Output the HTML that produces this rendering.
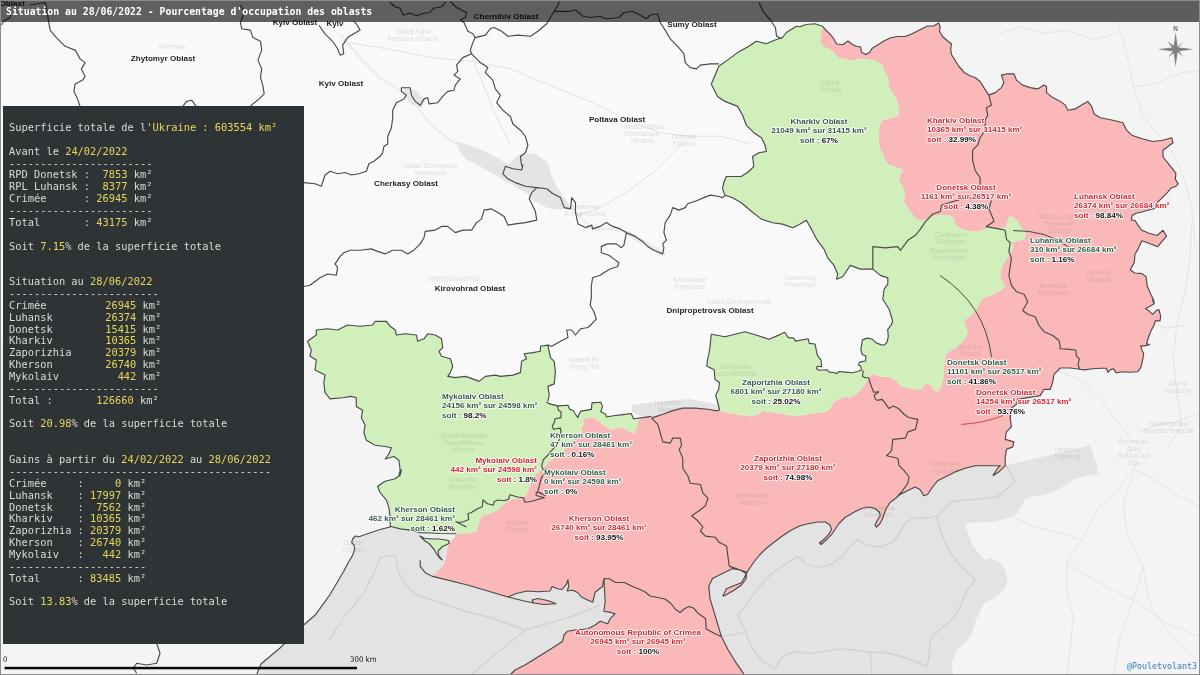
<!DOCTYPE html>
<html lang="fr"><head><meta charset="utf-8"><title>Situation au 28/06/2022</title>
<style>
html,body{margin:0;padding:0;}
body{width:1200px;height:675px;overflow:hidden;background:#f4f4f4;position:relative;font-family:"Liberation Sans",sans-serif;}
#map{position:absolute;left:0;top:0;width:1200px;height:675px;}
#title{position:absolute;left:1px;top:1px;width:1199px;height:21.4px;background:rgba(0,0,0,.62);color:#fff;
 font:bold 9.82px/22px "DejaVu Sans Mono","Liberation Mono",monospace;white-space:pre;padding-left:5px;box-sizing:border-box;}
#panel{position:absolute;left:2.8px;top:106px;width:300.9px;height:537.5px;background:#2e3436;}
#panel pre{margin:0;position:absolute;left:6.2px;top:16.1px;font:10.37px/11.86px "DejaVu Sans Mono","Liberation Mono",monospace;color:#d9dcd6;white-space:pre;}
#panel b{font-weight:normal;color:#e6d659;}
#panel i{display:inline-block;width:2.6px;}
.lb{position:absolute;font:bold 8.1px/9.4px "Liberation Sans",sans-serif;white-space:nowrap;
 text-shadow:0 0 1px #fff,0 0 1px #fff,0 0 2px #fff,0 0 2px #fff,1px 0 0 #fff,-1px 0 0 #fff,0 1px 0 #fff,0 -1px 0 #fff;}
.lb.g{color:#2f5d43;} .lb.r{color:#d7222c;} .lb b{color:#111;}
.lb.c{text-align:center;transform:translateX(-50%);} .lb.e{text-align:right;transform:translateX(-100%);}
.ob{position:absolute;font:bold 8.1px/10px "Liberation Sans",sans-serif;color:#222;white-space:nowrap;transform:translate(-50%,-50%);
 text-shadow:0 0 2px #fff,0 0 3px #fff,0 0 4px #fff,0 0 5px #fff,0 0 6px #fff,0 0 3px #fff,0 0 2px #fff;}
.ct{position:absolute;font:6.4px/7px "Liberation Sans","DejaVu Sans",sans-serif;color:rgba(110,110,110,.2);text-align:center;white-space:nowrap;transform:translate(-50%,-50%);}
#sc0,#sc1{position:absolute;font:7.8px/10px "DejaVu Sans Condensed","DejaVu Sans","Liberation Sans",sans-serif;color:#111;}
#frame{position:absolute;left:0;top:0;width:1198px;height:673px;border:1px solid #8c8c8c;pointer-events:none;}
#credit{text-shadow:0 0 2px #dbe8f7;position:absolute;right:2.8px;top:660.6px;font:8.3px/11px "DejaVu Sans Mono","Liberation Mono",monospace;color:#3d7cc0;}
#panel pre,#title,.lb,.ob,.ct,#credit,#sc0,#sc1,#map{will-change:transform;}
</style></head><body>
<svg id="map" viewBox="0 0 1200 675" width="1200" height="675">
<path d="M256 676 L261 664 L280 648 L300 631 L256 676 L261 664 L280 648 L300 628.3 L306.3 622.8 L315 615.3 L325.5 600.9 L330 594.5 L334.5 587 L339.7 578 L344.2 570.5 L348 563 L352.5 555.5 L354.7 549.5 L354 545 L351.7 542.7 L352.5 539 L355.5 536 L359.2 536.7 L363 535.2 L372 532.2 L381 529.2 L390 527 L390.2 526.3 L460 520 L470 560 L520 578 L612 570 L622 620 L560 676Z" fill="#e3e3e3"/>
<path d="M992.7 475.7 L1005.2 465 L1012.7 463.8 L1030.2 460 L1045.3 456.3 L1060.3 452.5 L1075.3 450 L1090.3 444.4 L1092.8 453.2 L1097.8 468.2 L1097.8 473.8 L1085.3 476.3 L1075.3 478.8 L1065.3 485.1 L1055.3 491.3 L1045.3 495.1 L1035.2 496.3 L1025.2 498.8 L1021.5 506.3 L1017.7 512.6 L1012.7 516.4 L1005.2 518.9 L995.2 521.4 L982.6 522.6 L970.1 522.6 L965.1 525.1 L968.9 535.1 L972.6 545.2 L980.1 555.2 L985.1 560.2 L990.2 557.7 L1000.2 562.7 L1005.2 570.2 L1007.7 580.2 L1005.2 587.7 L1000.2 594 L992.7 599 L985.1 602.8 L980.1 610.3 L977.6 619 L976.7 616.7 L973.3 630 L966.7 641.7 L956.7 650 L951.7 663.3 L953.3 675 L953.3 676 L744 676 L743.8 673.8 L735.1 661.3 L727.5 648.7 L721.3 636.2 L717.5 623.7 L713.8 611.2 L710 598.7 L708.8 586.1 L712.5 578.6 L722.5 573.6 L732.6 568.6 L740.1 569.9 L746.3 573.6 L747.5 571.5 L753.5 562.5 L759.5 555 L765.5 549 L773 543 L782 536.2 L791 530.2 L800 525.7 L809 523.5 L818 522 L825.5 522 L830 525 L831.5 529.5 L828.5 534.7 L824 539.2 L819.5 543 L821 544.5 L827 539.2 L831.5 534.7 L834.5 530.2 L839 523.5 L845 517.5 L854 512.2 L861.5 508.5 L869 507 L875 508.5 L879.5 512.2 L880.2 516 L877.2 520.5 L875 525 L876.5 527.2 L879.5 524.2 L882.5 519 L884 514.5 L886.2 508.5 L890 502.5 L896 498 L900 494.5 L900 494.5 L907.5 490.7 L915 487 L920 489.5 L923.8 495.7 L927.5 494.5 L932.6 487 L937.6 480.7 L945.1 477 L955.1 471.9 L965.1 468.2 L975.1 465.7 L987.7 465.7 L1000.2 465.7 L997.7 468.2 L992.7 475.7Z" fill="#e3e3e3"/>
<path d="M737.6 614.9 L743.8 608.7 L757.6 588.6 L766.4 578.6 L775.1 571.1 L787.7 562.3 L797.7 556.1 L805.2 563.6 L817.7 567.4 L830.2 564.9 L842.7 556.1 L852.8 543.6 L857.8 539.8 L865.3 544.8 L880.3 547.3 L892.8 542.3 L900.4 532.3 L905.4 522.3 L915.4 517.3 L925.4 518.5 L936.7 516 L940.4 531 L947.9 548.6 L960.5 566.1 L975.5 579.9 L966.7 591.1 L960.5 606.2 L952.9 618.7 L940.4 628.7 L930.4 638.7 L929.2 656.3 L926.6 666.3 L915.4 661.3 L900.4 656.3 L885.3 652.5 L870.3 652.5 L855.3 650 L840.2 648.7 L825.2 651.3 L810.2 653.8 L795.2 651.3 L782.6 656.3 L775.1 668.8 L762.6 661.3 L752.6 648.7 L745.1 631.2 L737.6 614.9 M870.3 652.5 L871.6 676.3 M722.5 636.2 L743.8 632.5 M328.8 640.3 L345.1 615.3 L362.6 595.2 L375.1 570.2 L380.1 557.7 L395.2 555.1 L397.7 570.2 L405.2 585.2 L417.7 595.2 L440.2 602.7 L462.8 610.2 L490.3 617.8 L512.9 625.3 L525.4 630.3 L550.4 622.8 L575.5 615.3 L600 605.2 M937 516.5 L952 501.5 L997 497 L1015 482 L1006 465.5 M527.5 628.5 L493 656 L470 676" fill="none" stroke="#d2d2d2" stroke-width="1.5" stroke-linejoin="round"/>
<path d="M0 0 L757 0 L759.1 2.5 L762.9 11.3 L770.4 20 L775.4 27.5 L776.6 36.3 L781.6 38.8 L800 60 L800 150 L900 250 L900 395 L720 415 L650 420 L560 430 L400 430 L400 345 L303 341 L0 341Z" fill="#f9f9f9"/>
<path d="M456.3 141.3 L472.6 146.3 L490.2 153.8 L507.7 163.9 L520.2 153.8 L535.2 153.8 L547.8 162.6 L551.5 175.1 L556.5 186.4 L566.5 200.2 L570.3 207.7 L560.3 209.7 L546.5 207.7 L539 202.7 L531.5 200.2 L527.7 193.9 L515.2 186.4 L497.7 176.4 L480.1 166.4 L465.6 158.9 L458.9 150.1Z" fill="#e4e4e4"/>
<path d="M403 88 L415 90 L425 100 L422 108 L410 104Z" fill="#e4e4e4"/>
<path d="M632 405 L645 403 L660 402 L675 400 L690 399 L705 402 L718 405 L718.8 410.6 L707.9 409.3 L695.3 408.1 L682.8 408.1 L672.8 410.6 L662.8 414.3 L651.5 418.1 L640 416 L632 412Z" fill="#e4e4e4"/>
<path d="M341 35 L360 57.5 L382.5 80 L408.8 95 L431 125 L450 140 L460 146" fill="none" stroke="#ebebeb" stroke-width="2" stroke-linejoin="round" stroke-linecap="round"/>
<path d="M570.3 207.7 L592.6 228.9 L612 229 L626.4 232.6" fill="none" stroke="#ebebeb" stroke-width="2.5" stroke-linejoin="round" stroke-linecap="round"/>
<path d="M626.4 232.6 L640 240 L652 248 L662.7 254" fill="none" stroke="#ebebeb" stroke-width="5" stroke-linejoin="round" stroke-linecap="round"/>
<path d="M1136.7 463.3 L1130 483.3 L1123.3 503.3 L1126.7 533.3 L1143.3 566.7 L1146.7 590 L1153.3 610 L1166.7 630 L1186.7 650 L1200 663.3 M1136.7 463.3 L1120 486.7 L1096.7 510 L1083.3 536.7 L1066.7 563.3 L1066.7 590 L1073.3 616.7 L1070 650 L1066.7 675 M1136.7 470 L1160 483.3 L1180 496.7 L1200 506.7 M1013.3 516.7 L1033.3 526.7 L1060 533.3 L1083.3 540 M1143.3 566.7 L1133.3 600 L1120 636.7 L1113.3 675 M1066.7 563.3 L1100 583.3 L1133.3 600 L1166.7 623.3 L1200 636.7 M1191.7 225 L1190 258.3 L1185 291.7 L1176.7 325 L1173.3 358.3 L1176.7 391.7 L1181.7 425 L1166.7 450 M1140 431.7 L1156.7 425 L1176.7 421.7 L1200 411.7 M1060 371.7 L1083.3 381.7 L1100 398.3 L1120 425 L1133.3 441.7 M1146.7 321.7 L1166.7 328.3 L1185 325 M1116.7 20 L1123.3 40 L1128.3 60 L1133.3 86.7 L1143.3 116.7 L1156.7 133.3 L1173.3 153.3 L1183.3 176.7 L1191.7 206.7 L1195 245 M1000 33.3 L1020 26.7 L1043.3 33.3 L1066.7 30 L1093.3 40 L1116.7 33.3 M1133.3 86.7 L1156.7 83.3 L1180 73.3 L1200 70 M348.7 42.5 L393.7 50 L431.2 57.5 L468.7 61.2 L510 68.7 L555 87.5 L592.5 102.5 L630 121.2 L660 132.5 L686.2 136.2 L719.9 136.2 L749.9 143.7 M686.2 140 L656.2 170 L626.2 192.5 L600 207.5 L577.5 215 M472.5 57.5 L487.5 95 L495 113.7 L510 143.7" fill="none" stroke="#e2e2e2" stroke-width="1" stroke-linejoin="round"/>
<path d="M822.5 26.3 L826.2 30.5 L830 34.2 L833.7 38.7 L836.7 44 L842.7 44.7 L848 41 L851.7 44 L856.2 46.2 L860.7 47 L861.5 52.2 L866 54.5 L869.7 52.2 L872 48.5 L878 44.7 L884 41 L890 38 L897.5 36.5 L905 36.5 L911 34.2 L917 31.2 L923 28.2 L927.5 26 L933.5 26 L938.7 23 L940.2 26.7 L939.5 31.2 L942.5 36.5 L947.7 41 L951.5 44 L950.7 49.2 L951.5 54.5 L955.2 60.5 L959 66.5 L964.2 72.5 L969.5 75.5 L975.5 77.7 L980 81.5 L983.9 87.6 L988.9 95.1 L995.2 92.6 L1001.4 87.6 L1003.9 82.6 L1001.4 75.1 L1007.7 73.8 L1013.9 73.8 L1016.5 80.1 L1022.7 85.1 L1030.2 87.6 L1037.7 88.9 L1044 85.1 L1046.5 86.4 L1046.5 92.6 L1052.8 97.6 L1060.3 101.4 L1065.3 105.1 L1067.8 110.2 L1075.3 108.9 L1081.6 105.1 L1087.8 101.4 L1091.6 106.4 L1094.1 113.9 L1100.4 117.7 L1112.9 120.2 L1122.9 122.7 L1126.6 130.2 L1131.7 135.2 L1142.9 139 L1152.9 141.5 L1163 140.2 L1171.7 137.7 L1173 142.7 L1168 146.5 L1163 150.2 L1163 157 L1167.7 162.9 L1172.4 168.7 L1175.9 173.4 L1175.3 179.3 L1178.2 183.9 L1175.9 186.3 L1171.2 188 L1171.2 188 L1167.7 192.1 L1163 196.8 L1159.5 200.3 L1156 203.8 L1154.8 208.5 L1147.8 210.3 L1141.9 212 L1136.1 213.2 L1132 215.6 L1131.4 220.2 L1134.9 220.2 L1137.8 224.9 L1140.8 229 L1141.9 230.3 L1149 233.2 L1157.2 235.5 L1163 230.3 L1166.5 236.1 L1157.7 246.7 L1150.1 243.7 L1141.9 240.8 L1137.8 249.6 L1134.9 254.3 L1134.3 262.5 L1130.2 270.1 L1134.9 273 L1141.9 273.6 L1146 276.5 L1147.2 285.9 L1150.7 294.1 L1153.6 299.9 L1154.2 304 L1152.5 299.7 L1154.2 303.8 L1149 306.7 L1145.5 308.5 L1149 310.8 L1152.5 314.3 L1156 310.8 L1158.9 309.6 L1160.7 316.1 L1160.1 320.8 L1155.4 320.8 L1153.6 326 L1151.3 330.1 L1149 336 L1147.2 341.2 L1146.6 343.6 L1149.5 344.7 L1144.3 345.9 L1140.8 345.9 L1141.9 350 L1143.7 353.5 L1142.5 360.6 L1140.8 367.6 L1137.8 371.7 L1137.8 371.7 L1130.2 372.3 L1123.2 371.7 L1116.2 372.8 L1113.3 368.7 L1110.3 369.9 L1108 372.3 L1106.2 368.2 L1101 368.2 L1092.8 368.7 L1084.6 369.9 L1079.9 369.3 L1079.9 369.3 L1070.3 368 L1060.3 368 L1054 374.3 L1052.8 381.8 L1050.3 389.3 L1044 389.3 L1040.2 395.6 L1025.2 398.1 L1017.7 399.3 L1016.5 404.3 L1011.4 408.1 L1010.2 418.1 L1011.4 426.9 L1006.4 431.9 L1005.2 439.4 L1013.9 441.9 L1012.7 446.9 L1006.4 449.4 L1005.2 458.2 L1005.2 465.7 L998.9 471.9 L992.7 475.7 L997.7 468.2 L1000.2 465.7 L987.7 465.7 L975.1 465.7 L965.1 468.2 L955.1 471.9 L945.1 477 L937.6 480.7 L932.6 487 L927.5 494.5 L923.8 495.7 L920 489.5 L915 487 L907.5 490.7 L900 494.5 L900 494.5 L896 498 L890 502.5 L886.2 508.5 L884 514.5 L882.5 519 L879.5 524.2 L876.5 527.2 L875 525 L877.2 520.5 L880.2 516 L879.5 512.2 L875 508.5 L869 507 L861.5 508.5 L854 512.2 L845 517.5 L839 523.5 L834.5 530.2 L831.5 534.7 L827 539.2 L821 544.5 L819.5 543 L824 539.2 L828.5 534.7 L831.5 529.5 L830 525 L825.5 522 L818 522 L809 523.5 L800 525.7 L791 530.2 L782 536.2 L773 543 L765.5 549 L759.5 555 L753.5 562.5 L747.5 571.5 L746.3 573.6 L740.1 569.9 L732.6 568.6 L722.5 573.6 L712.5 578.6 L708.8 586.1 L710 598.7 L713.8 611.2 L717.5 623.7 L721.3 636.2 L727.5 648.7 L735.1 661.3 L743.8 673.8 L744 676 L510 676 L510 675 L515 670 L525 665 L535.1 658.8 L545.1 652.5 L555.1 646.2 L562.6 641.2 L563.9 635 L567.6 631.2 L575.1 630 L587.7 628.7 L595.2 625 L600.2 621.2 L607.7 623.7 L610.2 618.7 L615.2 613.7 L610.2 612.4 L603.9 611.2 L605.2 601.2 L603.9 578.6 L602.5 586.5 L599.5 588.7 L595 592.5 L594.2 596.2 L592.7 602.2 L587.5 600 L581.5 597 L577.7 592.5 L572.5 590.2 L567.2 591 L568.7 586.5 L568 579.7 L566.5 584.2 L562 589.5 L557.5 588.7 L552.2 586.5 L550 591 L538 591.7 L527.5 591 L517 593.2 L509.5 596.2 L508 597 L467.5 585 L432.7 576.4 L438 570.9 L441 568.2 L444.7 563 L446.2 557 L447 551 L448.5 545 L451.5 540.5 L455.2 536.7 L456 533.7 L462 533.7 L469.5 533 L477 531.5 L477.7 525.5 L480 519.5 L483 515 L488.2 514.2 L493.5 512 L498 509.7 L501.7 506 L507 501.5 L513 499.2 L519 497.7 L525 496.2 L528 491 L531 483.5 L534 476 L540.1 470.7 L542.8 469.1 L545.8 465.6 L548.1 462 L561 454.4 L566.8 445.1 L582 432.2 L580.9 428.1 L583.8 424 L582.6 419.9 L586.7 418.1 L592.6 417.6 L597.8 419.9 L601.9 424 L606.6 427.5 L612.5 429.8 L618.3 427.5 L623 428.1 L628.9 431 L634.1 433.4 L637.1 426.9 L638.2 419.7 L642.9 417.6 L651.1 416.4 L662.8 414.3 L672.8 410.6 L682.8 408.1 L695.3 408.1 L707.9 409.3 L715.4 410.6 L718.8 410.6 L725.5 412.5 L734.5 414 L743.5 415.5 L751 416.2 L758.5 414 L763 411 L769 411.7 L778 413.2 L787 414.7 L796 416.2 L805 414.7 L814 413.2 L821.5 412.5 L827.5 411 L831.2 406.5 L833.5 402 L839.5 399 L845.5 396.7 L850 397.4 L856 394.3 L861.1 389.3 L865.1 384.3 L868.6 378.2 L869.6 374.7 L874.2 374.2 L880.2 376.7 L887.3 376.7 L893.3 378.7 L897.4 382.2 L900.4 385.8 L906.4 387.8 L912.5 388.8 L918.5 389.8 L922.5 388.8 L923.6 384.8 L927.6 383.8 L931.6 385.8 L933.6 389.8 L936.6 391.8 L939.7 389.8 L941.7 384.3 L943.2 378.2 L944.2 370.2 L944.5 360 L946 354 L952 349.5 L958 346.5 L961.7 342 L965.5 337.5 L967.7 331.5 L965.5 326.2 L964 320.2 L970 316.5 L976 310.5 L979 304.5 L982 298.5 L988 296.2 L994 294 L1000 291 L1005.2 286.5 L1002.2 281.2 L1000 276 L1000.7 270.9 L1001.5 267.5 L1004.5 262.2 L1007.5 257 L1010.5 253.2 L1012.7 248 L1012 242 L1015 241.2 L1024 239.7 L1026.2 234.5 L1021.7 227.7 L1018 222.5 L1013.5 217.2 L1009.7 216.5 L1007.5 221 L1006 227.7 L1000 228.5 L989.5 227.7 L985 229.2 L979 231.5 L971.5 231.5 L964 230 L958 227 L954.2 222.5 L953.5 217.2 L947.5 215 L940 215 L932.5 216.5 L926.5 219.5 L920.5 220.2 L913.7 218 L912.2 213.5 L907.7 207.5 L904 201.5 L904.7 194 L902.5 186.5 L898.7 180.5 L899.5 176 L903.5 170 L897.5 167.7 L890 165.5 L885.5 161 L883.2 155 L880.2 149 L878.7 141.5 L878.7 134 L879.5 126.5 L881.7 120.5 L890 118.2 L897.5 116 L898.2 116 L899 110 L897.5 104 L896 98 L892.2 92 L889.2 87.5 L888.5 81.5 L887 75.5 L884 71 L882.5 65 L878 62 L873.5 59.7 L867.5 59.7 L860 59 L852.5 60.5 L846.5 59.7 L839 58.2 L834.5 53.7 L830 49.2 L824 47 L820.2 42.5 L821 35 L822.5 29 L822.5 26.3Z" fill="#fab8b9"/>
<path d="M532 600 L538 598.5 L548.5 600.7 L556 603.7 L544 604.5 L533.5 603Z" fill="#fab8b9"/>
<path d="M722.7 596.2 L726.5 588.7 L735.5 585 L741.5 582.7 L744.5 577.5 L746.7 572.2 L746 579 L741.5 585 L734 590.2 L725 595.5Z" fill="#fab8b9"/>
<path d="M711.3 83.9 L718.8 66.3 L727.5 60.1 L737.6 52.6 L748.8 46.3 L756.3 41.3 L766.4 43.8 L775.1 40 L782.6 37.5 L786.4 32.5 L796.4 26.3 L800 26.7 L806 24.5 L815 23.7 L822.5 26.3 L822.5 29 L821 35 L820.2 42.5 L824 47 L830 49.2 L834.5 53.7 L839 58.2 L846.5 59.7 L852.5 60.5 L860 59 L867.5 59.7 L873.5 59.7 L878 62 L882.5 65 L884 71 L887 75.5 L888.5 81.5 L889.2 87.5 L892.2 92 L896 98 L897.5 104 L899 110 L898.2 116 L897.5 116 L890 118.2 L881.7 120.5 L879.5 126.5 L878.7 134 L878.7 141.5 L880.2 149 L883.2 155 L885.5 161 L890 165.5 L897.5 167.7 L903.5 170 L899.5 176 L898.7 180.5 L902.5 186.5 L904.7 194 L904 201.5 L907.7 207.5 L912.2 213.5 L913.7 218 L920.5 220.2 L926.5 219.5 L932.5 216.5 L940 215 L947.5 215 L953.5 217.2 L954.2 222.5 L958 227 L964 230 L971.5 231.5 L979 231.5 L985 229.2 L989.5 227.7 L1000 228.5 L1006 227.7 L1007.5 221 L1009.7 216.5 L1013.5 217.2 L1018 222.5 L1021.7 227.7 L1026.2 234.5 L1024 239.7 L1015 241.2 L1012 242 L1012.7 248 L1010.5 253.2 L1007.5 257 L1004.5 262.2 L1001.5 267.5 L1000.7 270.9 L1000 276 L1002.2 281.2 L1005.2 286.5 L1000 291 L994 294 L988 296.2 L982 298.5 L979 304.5 L976 310.5 L970 316.5 L964 320.2 L965.5 326.2 L967.7 331.5 L965.5 337.5 L961.7 342 L958 346.5 L952 349.5 L946 354 L944.5 360 L944.2 370.2 L943.2 378.2 L941.7 384.3 L939.7 389.8 L936.6 391.8 L933.6 389.8 L931.6 385.8 L927.6 383.8 L923.6 384.8 L922.5 388.8 L918.5 389.8 L912.5 388.8 L906.4 387.8 L900.4 385.8 L897.4 382.2 L893.3 378.7 L887.3 376.7 L880.2 376.7 L874.2 374.2 L869.6 374.7 L868.6 378.2 L865.1 384.3 L861.1 389.3 L856 394.3 L850 397.4 L845.5 396.7 L839.5 399 L833.5 402 L831.2 406.5 L827.5 411 L821.5 412.5 L814 413.2 L805 414.7 L796 416.2 L787 414.7 L778 413.2 L769 411.7 L763 411 L758.5 414 L751 416.2 L743.5 415.5 L734.5 414 L725.5 412.5 L718.8 410.6 L719.5 409.5 L718 403.5 L715.7 395.2 L718.7 389.2 L719.5 382.5 L715 379.5 L714.2 369.7 L706.7 366 L707.5 360 L709 353 L710 346.8 L711.3 334.3 L725 336.8 L745.1 331.7 L757.6 335.5 L768.9 339.3 L780 334.6 L784.7 332.3 L788.2 337.6 L794 338.1 L795.2 341.1 L808.1 338.7 L809.3 343.4 L815.1 344 L816.3 350.4 L817.5 355.7 L821 359.8 L821.6 366.8 L817.5 366.2 L816.3 368 L818.6 370.3 L826.8 369.7 L829.2 372.1 L835 372.7 L836.2 373.8 L839.1 371.5 L845.6 372.1 L852.6 372.7 L857.3 371.5 L861.4 370.3 L860.8 366.2 L858.4 365.1 L859.6 362.1 L865.5 361 L866 356.3 L861.9 353.9 L860.8 349.3 L861.9 343.4 L862.5 339.9 L867.2 338.1 L872.5 339.3 L876 342.8 L880.7 344.6 L884.2 345.2 L887.1 342.2 L888.3 336.4 L887.7 329.4 L890.6 325.9 L892.4 322.3 L892.4 320 L889.1 309.2 L882.8 299.2 L884.1 289.2 L887.8 284.2 L887.8 277.9 L880.3 275.4 L872.8 269.1 L860.3 269.1 L850.3 265.4 L842.7 276.7 L836.5 279.2 L837.7 274.1 L834 265.4 L827.7 257.9 L824 249.1 L816.5 239.1 L811.4 229.1 L806.4 220.3 L800.2 224.1 L792.7 227.8 L782.6 224.1 L772.6 222.8 L761.4 219.1 L750.1 210.3 L741.3 202.8 L732.6 197.8 L725 195.3 L722.5 189 L723.8 182.8 L726.3 176.5 L741.3 176.5 L748.8 171.5 L753.8 166.5 L752.6 156.5 L758.9 152.7 L766.4 151.5 L765.1 145.2 L761.4 137.7 L753.8 132.7 L746.3 125.2 L742.6 115.2 L737.6 106.4 L725 101.4 L717.5 96.4 L711.3 83.9Z" fill="#d1efbb"/>
<path d="M307.5 341.3 L316.3 335 L316.3 330 L327.5 328.8 L337.6 330 L347.6 325 L360.1 326.3 L372.6 325 L375.1 321.3 L386.4 321.3 L390.2 326.3 L395.2 330 L396.4 335 L405.2 333.8 L416.5 335 L417.7 341.3 L424 338.8 L427.7 333.8 L435.2 335 L441.5 338.8 L442.7 347.6 L439 351.3 L441.5 356.3 L450.3 358.8 L452.8 366.3 L450.3 372.6 L447.8 376.4 L455.3 377.6 L465.3 376.4 L472.8 378.9 L479.1 381.4 L485.3 376.4 L495.3 375.1 L500.4 376.4 L512.9 375.1 L520.4 372.6 L521.6 361.3 L526.6 358.8 L524.1 353.8 L532.9 352.6 L540.4 351.3 L540.4 346.3 L547.9 345.1 L550.4 357.6 L554.2 361.3 L555.4 372.6 L554.2 383.9 L547.9 386.4 L549.2 395.1 L547.9 401.4 L546.3 402.3 L550.4 404.1 L557.5 405.9 L568 405.3 L569.7 409.4 L573.3 410.5 L575 413.5 L577.9 417.6 L579.1 414 L580.9 411.1 L591.4 409.4 L592 402.9 L600.8 402.3 L602.5 406.4 L600.8 411.7 L605.5 414 L606.6 417 L613.6 415.8 L623 414.6 L631.2 413.5 L633.5 418.7 L638.2 419.7 L637.1 426.9 L634.1 433.4 L628.9 431 L623 428.1 L618.3 427.5 L612.5 429.8 L606.6 427.5 L601.9 424 L597.8 419.9 L592.6 417.6 L586.7 418.1 L582.6 419.9 L583.8 424 L580.9 428.1 L582 432.2 L566.8 445.1 L561 454.4 L548.1 462 L545.8 465.6 L542.8 469.1 L540.1 470.7 L534 476 L531 483.5 L528 491 L525 496.2 L519 497.7 L513 499.2 L507 501.5 L501.7 506 L498 509.7 L493.5 512 L488.2 514.2 L483 515 L480 519.5 L477.7 525.5 L477 531.5 L469.5 533 L462 533.7 L456 533.7 L440 533.5 L430 533 L420.2 532.6 L410.2 530.1 L400.2 528.9 L390.2 526.3 L390.2 517.6 L388.9 507.6 L386.4 500.1 L380.1 492.5 L377.6 486.3 L385.1 481.3 L395.2 478.8 L400.2 475 L401.4 470 L398.9 475.3 L400.2 470.3 L398.9 460.3 L393.9 456.5 L385.1 459 L388.9 454 L391.4 447.7 L385.1 446.5 L375.1 445.2 L366.4 440.2 L363.9 432.7 L365.1 425.2 L361.4 417.7 L362.6 410.2 L356.3 406.4 L356.3 397.7 L351.3 396.4 L342.6 397.7 L330.1 398.9 L325 392.6 L323.8 382.6 L325 375.1 L315 370.1 L316.3 360.1 L310 356.3 L311.3 350.1 L307.5 341.3Z" fill="#d1efbb"/>
<path d="M420.2 532.6 L430 533 L440 533.5 L456 533.7 L455.2 536.7 L451.5 540.5 L448.5 540.5 L439.5 539 L424.5 538.2 L420 536Z" fill="#ededee"/>
<path d="M424.5 538.2 L432 539 L439.5 539 L448.5 540.5 L449.2 543.5 L442.5 546.5 L438 551 L438.7 555.5 L442.5 560 L440.2 558.5 L436.5 554 L434.2 549.5 L429 543.5 L424.5 540.5 L420 536Z" fill="#d1efbb"/>
<path d="M711.3 83.9 L718.8 66.3 L727.5 60.1 L737.6 52.6 L748.8 46.3 L756.3 41.3 L766.4 43.8 L775.1 40 L782.6 37.5 L786.4 32.5 L796.4 26.3 L800 26.7 L806 24.5 L815 23.7 L822.5 26.3 L826.2 30.5 L830 34.2 L833.7 38.7 L836.7 44 L842.7 44.7 L848 41 L851.7 44 L856.2 46.2 L860.7 47 L861.5 52.2 L866 54.5 L869.7 52.2 L872 48.5 L878 44.7 L884 41 L890 38 L897.5 36.5 L905 36.5 L911 34.2 L917 31.2 L923 28.2 L927.5 26 L933.5 26 L938.7 23 L940.2 26.7 L939.5 31.2 L942.5 36.5 L947.7 41 L951.5 44 L950.7 49.2 L951.5 54.5 L955.2 60.5 L959 66.5 L964.2 72.5 L969.5 75.5 L975.5 77.7 L980 81.5 L983.9 87.6 L988.9 95.1 L988.9 95.1 L991.4 105.1 L986.4 107.7 L987.7 115.2 L985.1 120.2 L985.1 130.2 L980.1 137.7 L977.6 145.2 L972.6 150.2 L972.6 160.2 L975.1 170.3 L980.1 177.8 L980.1 189 M711.3 83.9 L717.5 96.4 L725 101.4 L737.6 106.4 L742.6 115.2 L746.3 125.2 L753.8 132.7 L761.4 137.7 L765.1 145.2 L766.4 151.5 L758.9 152.7 L752.6 156.5 L753.8 166.5 L748.8 171.5 L741.3 176.5 L726.3 176.5 L723.8 182.8 L722.5 189 L725 195.3 L732.6 197.8 L741.3 202.8 L750.1 210.3 L761.4 219.1 L772.6 222.8 L782.6 224.1 L792.7 227.8 L800.2 224.1 L806.4 220.3 L811.4 229.1 L816.5 239.1 L824 249.1 L827.7 257.9 L834 265.4 L837.7 274.1 L836.5 279.2 L842.7 276.7 L850.3 265.4 L860.3 269.1 L872.8 269.1 M872.8 269.1 L872.8 246.6 L885.3 247.9 L897.8 246.6 L900.4 250.4 L907.9 240.3 L915.4 235.3 L920.4 229.1 L925.4 221.6 L932.9 214 L940.4 211.5 L941.5 205.2 L950.5 202.2 L964 198.5 L985 197 L990.2 199.2 M991.4 200.3 L988.9 209 L992.7 217.8 L993.9 221.6 L986.4 226.6 L1000.2 229.1 L1005.2 230.3 L1006.4 239.1 L1010.2 242.8 L1008.9 251.6 L1011.4 257.9 L1010.2 266.6 L1008.9 275.4 L1011.4 285.4 L1016.5 291.7 L1024 294.2 L1027.7 301.7 L1022.7 310.5 L1027.7 314.2 L1035.2 316.7 L1039 325.5 L1044 331.7 L1052.8 335.5 L1059 340.5 L1060.3 346.8 L1060 348.8 L1067 349.1 L1075.8 350 L1076.4 355.9 L1079.3 358.8 L1078.1 365.2 L1079.9 369.3 M988.9 95.1 L995.2 92.6 L1001.4 87.6 L1003.9 82.6 L1001.4 75.1 L1007.7 73.8 L1013.9 73.8 L1016.5 80.1 L1022.7 85.1 L1030.2 87.6 L1037.7 88.9 L1044 85.1 L1046.5 86.4 L1046.5 92.6 L1052.8 97.6 L1060.3 101.4 L1065.3 105.1 L1067.8 110.2 L1075.3 108.9 L1081.6 105.1 L1087.8 101.4 L1091.6 106.4 L1094.1 113.9 L1100.4 117.7 L1112.9 120.2 L1122.9 122.7 L1126.6 130.2 L1131.7 135.2 L1142.9 139 L1152.9 141.5 L1163 140.2 L1171.7 137.7 L1173 142.7 L1168 146.5 L1163 150.2 L1163 157 L1167.7 162.9 L1172.4 168.7 L1175.9 173.4 L1175.3 179.3 L1178.2 183.9 L1175.9 186.3 L1171.2 188 M1171.2 188 L1167.7 192.1 L1163 196.8 L1159.5 200.3 L1156 203.8 L1154.8 208.5 L1147.8 210.3 L1141.9 212 L1136.1 213.2 L1132 215.6 L1131.4 220.2 L1134.9 220.2 L1137.8 224.9 L1140.8 229 L1141.9 230.3 L1149 233.2 L1157.2 235.5 L1163 230.3 L1166.5 236.1 L1157.7 246.7 L1150.1 243.7 L1141.9 240.8 L1137.8 249.6 L1134.9 254.3 L1134.3 262.5 L1130.2 270.1 L1134.9 273 L1141.9 273.6 L1146 276.5 L1147.2 285.9 L1150.7 294.1 L1153.6 299.9 L1154.2 304 L1152.5 299.7 L1154.2 303.8 L1149 306.7 L1145.5 308.5 L1149 310.8 L1152.5 314.3 L1156 310.8 L1158.9 309.6 L1160.7 316.1 L1160.1 320.8 L1155.4 320.8 L1153.6 326 L1151.3 330.1 L1149 336 L1147.2 341.2 L1146.6 343.6 L1149.5 344.7 L1144.3 345.9 L1140.8 345.9 L1141.9 350 L1143.7 353.5 L1142.5 360.6 L1140.8 367.6 L1137.8 371.7 M1137.8 371.7 L1130.2 372.3 L1123.2 371.7 L1116.2 372.8 L1113.3 368.7 L1110.3 369.9 L1108 372.3 L1106.2 368.2 L1101 368.2 L1092.8 368.7 L1084.6 369.9 L1079.9 369.3 M1079.9 369.3 L1070.3 368 L1060.3 368 L1054 374.3 L1052.8 381.8 L1050.3 389.3 L1044 389.3 L1040.2 395.6 L1025.2 398.1 L1017.7 399.3 L1016.5 404.3 L1011.4 408.1 L1010.2 418.1 L1011.4 426.9 L1006.4 431.9 L1005.2 439.4 L1013.9 441.9 L1012.7 446.9 L1006.4 449.4 L1005.2 458.2 L1005.2 465.7 L998.9 471.9 L992.7 475.7 M992.7 475.7 L997.7 468.2 L1000.2 465.7 L987.7 465.7 L975.1 465.7 L965.1 468.2 L955.1 471.9 L945.1 477 L937.6 480.7 L932.6 487 L927.5 494.5 L923.8 495.7 L920 489.5 L915 487 L907.5 490.7 L900 494.5 M900 494.5 L896 498 L890 502.5 L886.2 508.5 L884 514.5 L882.5 519 L879.5 524.2 L876.5 527.2 L875 525 L877.2 520.5 L880.2 516 L879.5 512.2 L875 508.5 L869 507 L861.5 508.5 L854 512.2 L845 517.5 L839 523.5 L834.5 530.2 L831.5 534.7 L827 539.2 L821 544.5 L819.5 543 L824 539.2 L828.5 534.7 L831.5 529.5 L830 525 L825.5 522 L818 522 L809 523.5 L800 525.7 L791 530.2 L782 536.2 L773 543 L765.5 549 L759.5 555 L753.5 562.5 L747.5 571.5 L746.3 573.6 L740.1 569.9 L732.6 568.6 L722.5 573.6 L712.5 578.6 L708.8 586.1 L710 598.7 L713.8 611.2 L717.5 623.7 L721.3 636.2 L727.5 648.7 L735.1 661.3 L743.8 673.8 M872.8 269.1 L880.3 275.4 L887.8 277.9 L887.8 284.2 L884.1 289.2 L882.8 299.2 L889.1 309.2 L892.4 320 L892.4 322.3 L890.6 325.9 L887.7 329.4 L888.3 336.4 L887.1 342.2 L884.2 345.2 L880.7 344.6 L876 342.8 L872.5 339.3 L867.2 338.1 L862.5 339.9 L861.9 343.4 L860.8 349.3 L861.9 353.9 L866 356.3 L865.5 361 L859.6 362.1 L858.4 365.1 L860.8 366.2 L861.4 370.3 M863.1 370.2 L862.6 376.2 L865.1 377.7 L868.6 377.7 L869.6 381.2 L871.7 387.3 L873.7 392.3 L878.7 391.8 L874.2 395.3 L875.2 398.9 L877.2 400.4 L882.2 399.4 L885.3 403.4 L888.8 408.4 L893.3 405.9 L898.4 408.4 L900.4 410.5 L904.4 414.5 L908.4 417.5 L917.9 419.4 L915.4 429.4 L907.9 431.9 L905.4 438.1 L892.8 439.4 L891.6 450.7 L886.6 455.7 L897.8 458.2 L899.1 465.7 L904.1 470.7 L909.1 477 L907.9 483.2 L901.6 492 L897.8 495.7 M718.8 410.6 L719.5 409.5 L718 403.5 L715.7 395.2 L718.7 389.2 L719.5 382.5 L715 379.5 L714.2 369.7 L706.7 366 L707.5 360 L709 353 L710 346.8 L711.3 334.3 L725 336.8 L745.1 331.7 L757.6 335.5 L768.9 339.3 L780 334.6 L784.7 332.3 L788.2 337.6 L794 338.1 L795.2 341.1 L808.1 338.7 L809.3 343.4 L815.1 344 L816.3 350.4 L817.5 355.7 L821 359.8 L821.6 366.8 L817.5 366.2 L816.3 368 L818.6 370.3 L826.8 369.7 L829.2 372.1 L835 372.7 L836.2 373.8 L839.1 371.5 L845.6 372.1 L852.6 372.7 L857.3 371.5 L861.4 370.3 M651.5 418.1 L662.8 414.3 L672.8 410.6 L682.8 408.1 L695.3 408.1 L707.9 409.3 L715.4 410.6 L718.8 410.6 M651.5 418.1 L657.8 424.4 L660.3 433.1 L662.8 441.9 L670.3 443.1 L672.8 438.1 L680.3 438.1 L681.6 445.7 L679.1 449.4 L682.8 458.2 L682.8 468.2 L687.8 475.7 L690.3 483.2 L700.4 484.5 L702.9 493.2 L707.9 498.2 L705.4 505.8 L699.1 510.8 L691.6 515.8 L697.8 520.8 L702.9 527 L700.4 531 L705.4 536.1 L715.4 537.3 L719.1 542.3 L726.6 546.1 L727.9 556.1 L729.2 566.1 L746.7 572.4 M603.9 578.6 L609.5 578.7 L615.5 582.5 L624.5 582.5 L632 586.2 L639.5 589.2 L645.5 592.2 L650 596 L657.5 597.5 L665 599 L671 603.5 L675.5 609.5 L680 612.5 L684.5 608.7 L689 606.5 L693.5 608 L698 613.2 L705.5 618.5 L706.2 629 L714.5 633.5 L721.2 636.5 M432.7 576.4 L467.5 585 L508 597 L509.5 596.2 L517 593.2 L527.5 591 L538 591.7 L550 591 L552.2 586.5 L557.5 588.7 L562 589.5 L566.5 584.2 L568 579.7 L568.7 586.5 L567.2 591 L572.5 590.2 L577.7 592.5 L581.5 597 L587.5 600 L592.7 602.2 L594.2 596.2 L595 592.5 L599.5 588.7 L602.5 586.5 L603.9 578.6 M603.9 578.6 L605.2 601.2 L603.9 611.2 L610.2 612.4 L615.2 613.7 L610.2 618.7 L607.7 623.7 L600.2 621.2 L595.2 625 L587.7 628.7 L575.1 630 L567.6 631.2 L563.9 635 L562.6 641.2 L555.1 646.2 L545.1 652.5 L535.1 658.8 L525 665 L515 670 L510 675 M307.5 341.3 L316.3 335 L316.3 330 L327.5 328.8 L337.6 330 L347.6 325 L360.1 326.3 L372.6 325 L375.1 321.3 L386.4 321.3 L390.2 326.3 L395.2 330 L396.4 335 L405.2 333.8 L416.5 335 L417.7 341.3 L424 338.8 L427.7 333.8 L435.2 335 L441.5 338.8 L442.7 347.6 L439 351.3 L441.5 356.3 L450.3 358.8 L452.8 366.3 L450.3 372.6 L447.8 376.4 L455.3 377.6 L465.3 376.4 L472.8 378.9 L479.1 381.4 L485.3 376.4 L495.3 375.1 L500.4 376.4 L512.9 375.1 L520.4 372.6 L521.6 361.3 L526.6 358.8 L524.1 353.8 L532.9 352.6 L540.4 351.3 L540.4 346.3 L547.9 345.1 L550.4 357.6 L554.2 361.3 L555.4 372.6 L554.2 383.9 L547.9 386.4 L549.2 395.1 L547.9 401.4 M546.3 402.3 L550.4 404.1 L557.5 405.9 L568 405.3 L569.7 409.4 L573.3 410.5 L575 413.5 L577.9 417.6 L579.1 414 L580.9 411.1 L591.4 409.4 L592 402.9 L600.8 402.3 L602.5 406.4 L600.8 411.7 L605.5 414 L606.6 417 L613.6 415.8 L623 414.6 L631.2 413.5 L633.5 418.7 L642.9 417.6 L651.1 416.4 M557.5 405.9 L558.6 410.5 L561 411.7 L561 417.6 L555.1 418.7 L553.9 423.4 L552.2 426.3 L553.4 429.3 L560.4 428.1 L561 431.6 L559.2 439.8 L555.1 446.8 L549.8 452.7 L548.1 455 L543.4 459.7 L541.7 465.6 L542.8 469.1 L546.3 469.4 L541.3 478.2 L537.6 492 L545.2 495.5 L540 492.5 L536.2 492.5 L536.2 495.5 L544.5 497.7 L538.5 499.2 L531 501.5 L525 502.2 L523.5 497.7 L517.5 497 L510 494.7 L508.5 499.2 L504 500.7 L498 500 L494.2 501.5 L493.5 505.2 L487.5 503.7 L483 500 L482.2 506.7 L477 509 L471 512.7 L468 513.5 L468.7 519.5 L463.5 521.7 L459 522.5 L456 521.7 L466.5 527 M307.5 341.3 L311.3 350.1 L310 356.3 L316.3 360.1 L315 370.1 L325 375.1 L323.8 382.6 L325 392.6 L330.1 398.9 L342.6 397.7 L351.3 396.4 L356.3 397.7 L356.3 406.4 L362.6 410.2 L361.4 417.7 L365.1 425.2 L363.9 432.7 L366.4 440.2 L375.1 445.2 L385.1 446.5 L391.4 447.7 L388.9 454 L385.1 459 L393.9 456.5 L398.9 460.3 L400.2 470.3 L398.9 475.3 L401.4 470 L400.2 475 L395.2 478.8 L385.1 481.3 L377.6 486.3 L380.1 492.5 L386.4 500.1 L388.9 507.6 L390.2 517.6 L390.2 526.3 M390.2 526.3 L400.2 528.9 L410.2 530.1 L420.2 532.6 L430 533 L440 533.5 L456 533.7 M420.2 560.2 L420.2 566.4 L425.2 572.7 L432.7 576.4 M424.5 538.2 L432 539 L439.5 539 L448.5 540.5 L449.2 543.5 L442.5 546.5 L438 551 L438.7 555.5 L442.5 560 L440.2 558.5 L436.5 554 L434.2 549.5 L429 543.5 L424.5 540.5 L420 536 L424.5 538.2 M30.1 5 L45.1 2.5 L46.3 7.5 L48.8 22.5 L50.1 30.1 L56.3 37.6 L65.1 46.3 L75.1 50.1 L80.1 58.9 L85.1 62.6 L81.4 68.9 L85.1 76.4 L82.6 80.1 L75.1 83.9 L73.9 91.4 L77.6 98.9 L80.1 106.4 M1.3 25 L3.8 21.3 L10 17.5 L11.3 12.5 M240.4 5 L244.2 12.5 L240.4 22.5 L241.7 28.8 L250.4 30.1 L252.9 37.6 L260.5 41.3 L261.7 50.1 L258 60.1 L261.7 68.9 L260.5 77.6 L263 86.4 L264.2 93.9 L259.2 98.9 L252.9 103.9 L250.4 106.4 M182.8 106.4 L186.6 101.4 L191.6 100.2 L195.3 105.2 L196.6 106.4 M318.8 25 L325 33.8 L332.6 41.3 L337.6 48.8 L340.1 55.1 L343.8 53.8 L342.6 45.1 L347.6 37.6 L353.8 33.8 L360.1 30.1 L356.3 23.8 L353.8 21.3 M390 2.5 L395 6.7 L400 8.3 L403.3 15 L410 13.3 L416.7 15.8 L423.3 13.3 L430 12.5 L433.3 8.3 L441.7 6.7 L445.8 1.7 M450.3 1.3 L456.5 7.5 L466.5 12.5 L465.3 17.5 L460.3 20 L464 22.5 L467.8 31.3 L472.8 33.8 L475.3 37.6 L472.8 42.6 L470.3 50.1 L471.6 53.8 M475.3 37.6 L485.3 35.1 L490.3 28.8 L494.1 27.5 L501.6 31.3 L507.9 36.3 L517.9 35.1 L530.4 36.3 L537.9 31.3 L546.7 23.8 L550.4 17.5 L554.2 11.3 L558 5 L559.2 1.3 M554.2 11.3 L563 11.3 L570.5 11.3 L575.5 10 L583 16.3 L590.5 17.5 L600 16.3 L603.8 18 L607.6 18.8 L618.9 17.5 L623.9 12.5 L632.6 11.3 L640.1 15 L646.4 18.8 L650.2 15 L657.7 13.8 L660.2 22.5 L665.2 30.1 L670.2 38.8 L677.7 46.3 L684 53.8 L685.2 62.6 L690.2 67.6 L696.5 68.9 L700.2 65.1 L710.3 63.9 L719 63.9 M759.1 2.5 L762.9 11.3 L770.4 20 L775.4 27.5 L776.6 36.3 L781.6 38.8 M471.6 53.8 L462.8 57.6 L456.5 65.1 L457.8 71.4 L454 75.1 L460.3 78.9 L455.3 85.1 L454 90.2 L447.8 91.4 L442.7 96.4 L437.7 102.7 L429 103.9 L427.7 97.7 L424 98.9 L420.2 105.2 L415.2 101.4 L411.4 95.2 L410.2 87.7 L401.4 87.7 L401.4 91.4 L406.4 95.2 L403.9 98.9 L396.4 102.7 L392.7 110.2 L392.7 117.7 L391.4 127.7 L387.7 136.5 L387.7 144 L383.9 146.5 L382.6 152.8 L380.1 156.3 L373.9 161.3 L368.9 163.8 L366.4 171.3 L358.9 173.8 L351.3 175 L345.1 172.5 L337.6 173.8 L330.1 171.3 L325 175 L321.3 186.3 L315 183.8 L303.8 182.6 M471.6 53.8 L480.3 62.6 L487.8 67.6 L485.3 72.6 L492.8 80.1 L495.3 88.9 L500.4 95.2 L496.6 102.7 L502.9 110.2 L510.4 116.5 L512.9 124 L520.4 130.2 L525.4 136.5 L527.9 145.3 L525.4 152.8 L520.4 156.5 L521.6 165.3 L522.9 165 L521.6 170 L512.9 168.8 L505.4 166.3 L502.9 173.8 L507.9 178.8 L515.4 182.6 L525.4 186.3 L536.7 187.6 L546.7 188.8 L552.9 193.8 L560.5 197.6 L564.2 207.6 L570.5 208.9 L571.7 197.6 L575.5 202.6 L575.5 212.6 L578 223.9 L585.5 227.6 L591.8 225.1 L592.6 228.9 L600.1 226.4 L606.3 222.6 L612.6 226.4 L620.1 228.9 L626.4 232.6 L635.1 236.4 L642.6 241.4 L647.7 246.4 L653.9 250.2 L662.7 253.9 L663.9 247.7 L662.7 243.9 L666.4 240.2 L663.9 232.6 L665.2 222.6 L670.2 215.1 L672.7 207.6 L679 210.1 L685.2 207.6 L687.7 203.8 L695.2 201.3 L704 197.6 L710.3 195.1 L717.8 196.3 L722.8 197.6 L725 195.3 M303.8 286.5 L310 285.2 L320 277.7 L327.5 274 L336.3 275.2 L337.6 267.7 L335.1 263.9 L340.1 256.4 L343.8 252.7 L350.1 250.2 L360.1 250.2 L371.4 248.9 L377.6 251.4 L385.1 253.9 L392.7 250.2 L401.4 250.2 L407.7 253.9 L413.9 250.2 L420.2 243.9 L424 237.7 L425.2 231.4 L435.2 230.1 L441.5 226.4 L447.8 226.4 L455.3 232.6 L462.8 230.1 L471.6 230.1 L476.6 222.6 L481.6 218.9 L484.1 210.1 L491.6 208.9 L497.8 212.6 L504.1 216.4 L507.9 225.1 L515.4 223.9 L525.4 222.6 L536.7 220.1 L535.4 211.4 L532.9 206.3 L529.2 198.8 L531.7 192.6 L536.7 187.6 M626.4 232.6 L623.9 245.2 L621.4 247.7 L616.3 243.9 L607.6 243.9 L601.3 246.4 L601.3 252.7 L608.8 255.2 L613.8 258.9 L618.9 262.7 L617.6 266.5 L610.1 269 L603.8 272.7 L600.1 275.2 L592.6 277.7 L591.3 286.5 L591.3 297.8 L590.1 305.3 L593.8 311.5 L596.3 319 L594.3 321.3 L588 327.5 L580.5 328.8 L575.5 335 L571.7 330 L566.7 330 L568 337.5 L560.5 341.3 L551.7 346.3 L547.9 345.1 M722.7 596.2 L726.5 588.7 L735.5 585 L741.5 582.7 L744.5 577.5 L746.7 572.2 L746 579 L741.5 585 L734 590.2 L725 595.5 L722.7 596.2 M156.7 643.3 L160 653.3 L156.7 663.3 L146.7 665 L136.7 663.3 L133.3 668.3 L136.7 673.3 M508 597 L523 600.7 L533.5 603 L544 604.5 L556 603.7 L548.5 600.7 L538 598.5 L532 600 L533.5 603 M390.2 526.3 L390 527 L381 529.2 L372 532.2 L363 535.2 L359.2 536.7 L355.5 536 L352.5 539 L351.7 542.7 L354 545 L354.7 549.5 L352.5 555.5 L348 563 L344.2 570.5 L339.7 578 L334.5 587 L330 594.5 L325.5 600.9 L315 615.3 L306.3 622.8 L300 628.3 L280 648 L261 664 L256 676" fill="none" stroke="#484b48" stroke-width="1.15" stroke-linejoin="round"/>
<path d="M940 275.5 Q985 305 991.5 357" fill="none" stroke="#3a443c" stroke-width="0.95"/>
<path d="M1013 230.6 Q1046 230 1068.5 247" fill="none" stroke="#3a443c" stroke-width="0.95"/>
<path d="M961.4 424.4 Q985 423 1002.7 415.6" fill="none" stroke="#d8373d" stroke-width="0.95"/>
<g fill="#808080"><path d="M1175.6 32.2 L1177.7 47.2 L1193.4 49.3 L1177.7 51.4 L1175.6 66.8 L1173.5 51.4 L1157.8 49.3 L1173.5 47.2Z"/>
<path d="M1167.8 41.4 L1176.4 47.6 L1183.6 41.4 L1177.3 48.5 L1183.4 57 L1176.4 51 L1168.2 57.2 L1173.9 50.1Z"/></g>
<text x="1175.6" y="30.8" text-anchor="middle" font-family="Liberation Sans, sans-serif" font-weight="bold" font-size="6.4" fill="#6a6a6a">N</text>
<rect x="4.5" y="666.8" width="352.5" height="2.5" fill="#0a0a0a"/>
</svg>
<div class="ct" style="left:172.0px;top:46.0px">Житомир</div>
<div class="ct" style="left:830.0px;top:86.0px">Харків<br>Charkiw</div>
<div class="ct" style="left:684.0px;top:140.0px">Полтава<br>Poltawa</div>
<div class="ct" style="left:413.4px;top:35.4px">Oblast Kyjiw<br>Київська область</div>
<div class="ct" style="left:430.0px;top:169.2px">Oblast Tscherkassy<br>Черкаська</div>
<div class="ct" style="left:585.0px;top:210.3px">Кременчук<br>Krementschuk</div>
<div class="ct" style="left:583.8px;top:362.6px">Кривий Ріг<br>Krywyj Rih</div>
<div class="ct" style="left:690.0px;top:283.0px">Кам'янське<br>Kamjanske</div>
<div class="ct" style="left:800.0px;top:281.2px">Павлоград<br>Pawlohrad</div>
<div class="ct" style="left:735.0px;top:369.7px">Запоріжжя<br>Saporischschja</div>
<div class="ct" style="left:667.5px;top:406.4px">Нікополь<br>Nikopol</div>
<div class="ct" style="left:352.6px;top:545.5px">Одеса<br>Odessa</div>
<div class="ct" style="left:461.5px;top:483.2px">Миколаїв<br>Mykolajiw</div>
<div class="ct" style="left:516.6px;top:525.7px">Херсон<br>Cherson</div>
<div class="ct" style="left:945.0px;top:467.3px">Маріуполь<br>Mariupol</div>
<div class="ct" style="left:1134.0px;top:451.5px">Ростов-на-<br>Дону<br>Rostow am<br>Don</div>
<div class="ct" style="left:1066.5px;top:452.5px">Таганрог<br>Taganrog</div>
<div class="ct" style="left:1099.0px;top:275.8px">Луганськ<br>Luhansk</div>
<div class="ct" style="left:1178.0px;top:387.4px">Шахти<br>Schachty</div>
<div class="ct" style="left:1169.0px;top:427.0px">Новочеркаськ<br>Nowotscherkassk</div>
<div class="ct" style="left:753.0px;top:498.8px">Мелітополь<br>Melitopol</div>
<div class="ct" style="left:879.0px;top:511.0px">Бердянськ<br>Berdjansk</div>
<div class="ct" style="left:951.3px;top:238.4px">Слов'янськ<br>Slowjansk</div>
<div class="ct" style="left:948.8px;top:253.7px">Краматорськ<br>Kramatorsk</div>
<div class="ct" style="left:970.0px;top:350.0px">Донецьк<br>Donezk</div>
<div class="ct" style="left:1052.8px;top:289.4px">Алчевськ<br>Altschewsk</div>
<div class="ct" style="left:1059.0px;top:222.8px">Oblast Luhansk<br>Луганська<br>область</div>
<div class="ct" style="left:462.8px;top:441.5px">Oblast Mykolajiw<br>Миколаївська<br>область</div>
<div class="ct" style="left:641.7px;top:132.6px">Oblast Poltawa<br>Полтавська<br>область</div>
<div class="ct" style="left:452.8px;top:277.7px">Oblast Kirowohrad</div>
<div class="ct" style="left:739.0px;top:300.8px">Oblast Dnipropetrowsk</div>
<div class="lb g c" style="left:819.0px;top:117.1px">Kharkiv Oblast<br>21049 km² sur 31415 km²<br>soit : <b>67%</b></div>
<div class="lb r" style="left:926.6px;top:116.4px">Kharkiv Oblast<br>10365 km² sur 31415 km²<br>soit : <b>32.99%</b></div>
<div class="lb r c" style="left:966.0px;top:182.5px">Donetsk Oblast<br>1161 km² sur 26517 km²<br>soit : <b>4.38%</b></div>
<div class="lb r" style="left:1074.0px;top:191.9px">Luhansk Oblast<br>26374 km² sur 26684 km²<br>soit : <b>98.84%</b></div>
<div class="lb g" style="left:1029.7px;top:236.3px">Luhansk Oblast<br>310 km² sur 26684 km²<br>soit : <b>1.16%</b></div>
<div class="lb g" style="left:947.1px;top:358.2px">Donetsk Oblast<br>11101 km² sur 26517 km²<br>soit : <b>41.86%</b></div>
<div class="lb r" style="left:975.9px;top:387.5px">Donetsk Oblast<br>14254 km² sur 26517 km²<br>soit : <b>53.76%</b></div>
<div class="lb g c" style="left:775.9px;top:378.2px">Zaporizhia Oblast<br>6801 km² sur 27180 km²<br>soit : <b>25.02%</b></div>
<div class="lb r c" style="left:787.7px;top:453.8px">Zaporizhia Oblast<br>20379 km² sur 27180 km²<br>soit : <b>74.98%</b></div>
<div class="lb r c" style="left:599.4px;top:513.8px">Kherson Oblast<br>26740 km² sur 28461 km²<br>soit : <b>93.95%</b></div>
<div class="lb r c" style="left:638.2px;top:627.7px">Autonomous Republic of Crimea<br>26945 km² sur 26945 km²<br>soit : <b>100%</b></div>
<div class="lb g" style="left:442.2px;top:392.1px">Mykolaiv Oblast<br>24156 km² sur 24598 km²<br>soit : <b>98.2%</b></div>
<div class="lb g" style="left:549.6px;top:431.2px">Kherson Oblast<br>47 km² sur 28461 km²<br>soit : <b>0.16%</b></div>
<div class="lb r e" style="left:537.4px;top:455.5px">Mykolaiv Oblast<br>442 km² sur 24598 km²<br>soit : <b>1.8%</b></div>
<div class="lb g" style="left:544.1px;top:467.7px">Mykolaiv Oblast<br>0 km² sur 24598 km²<br>soit : <b>0%</b></div>
<div class="lb g e" style="left:454.8px;top:505.4px">Kherson Oblast<br>462 km² sur 28461 km²<br>soit : <b>1.62%</b></div>
<div class="ob" style="left:469.5px;top:288.9px">Kirovohrad Oblast</div>
<div class="ob" style="left:710.0px;top:310.5px">Dnipropetrovsk Oblast</div>
<div class="ob" style="left:617.0px;top:120.0px">Poltava Oblast</div>
<div class="ob" style="left:406.0px;top:184.0px">Cherkasy Oblast</div>
<div class="ob" style="left:162.5px;top:58.5px">Zhytomyr Oblast</div>
<div class="ob" style="left:341.0px;top:83.5px">Kyiv Oblast</div>
<div class="ob" style="left:295.0px;top:23.0px">Kyiv Oblast</div>
<div class="ob" style="left:335.0px;top:24.0px">Kyiv</div>
<div class="ob" style="left:506.0px;top:16.5px">Chernihiv Oblast</div>
<div class="ob" style="left:691.5px;top:24.9px">Sumy Oblast</div>
<div class="ob" style="left:12.0px;top:3.6px">Oblast</div>
<div id="title">Situation au 28/06/2022 - Pourcentage d'occupation des oblasts</div>
<div id="panel"><pre>Superficie totale de l<b>'Ukraine : 603554 km²</b>

Avant le <b>24/02/2022</b>
-----------------------
RPD Donetsk : <b> 7853</b> km²
RPL Luhansk : <b> 8377</b> km²
Crimée      : <b>26945</b> km²
-----------------------
Total       : <b>43175</b> km²

Soit <b>7.15</b>% de la superficie totale


Situation au <b>28/06/2022</b>
------------------------
Crimée         <i></i><b>26945</b> km²
Luhansk        <i></i><b>26374</b> km²
Donetsk        <i></i><b>15415</b> km²
Kharkiv        <i></i><b>10365</b> km²
Zaporizhia     <i></i><b>20379</b> km²
Kherson        <i></i><b>26740</b> km²
Mykolaiv       <i></i><b>  442</b> km²
------------------------
Total :       <b>126660</b> km²

Soit <b>20.98</b>% de la superficie totale


Gains à partir du <b>24/02/2022</b> au <b>28/06/2022</b>
------------------------------------------
Crimée     : <b>    0</b> km²
Luhansk    : <b>17997</b> km²
Donetsk    : <b> 7562</b> km²
Kharkiv    : <b>10365</b> km²
Zaporizhia : <b>20379</b> km²
Kherson    : <b>26740</b> km²
Mykolaiv   : <b>  442</b> km²
----------------------
Total      : <b>83485</b> km²

Soit <b>13.83</b>% de la superficie totale</pre></div>
<div id="sc0" style="left:3.3px;top:654.6px">0</div>
<div id="sc1" style="left:350.4px;top:654.6px">300 km</div>
<div id="frame"></div>
<div id="credit">@Pouletvolant3</div>
</body></html>
